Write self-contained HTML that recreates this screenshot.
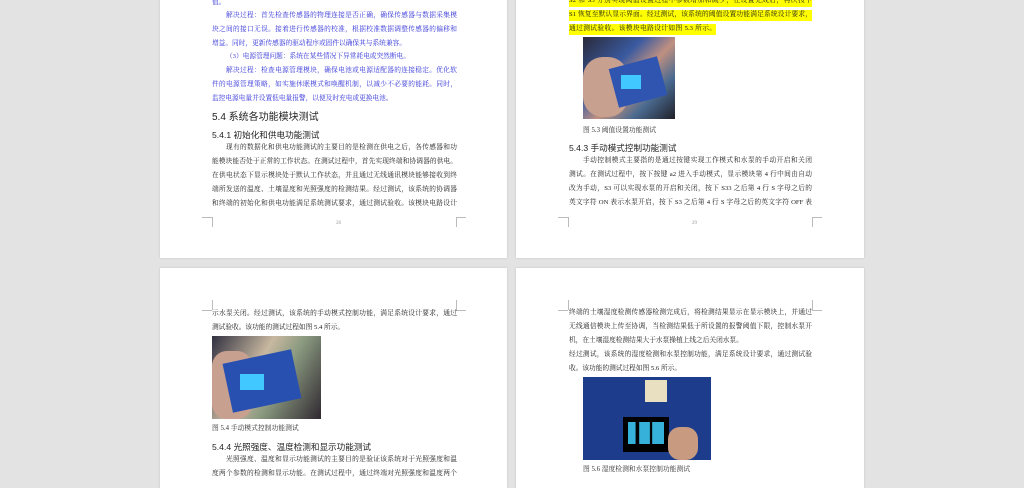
<!DOCTYPE html>
<html><head><meta charset="utf-8"><style>
body{margin:0;width:1024px;height:483px;background:#e3e3e3;position:relative;overflow:hidden;font-family:"Liberation Serif","Noto Serif CJK SC","Noto Sans CJK SC",serif;}
.pg{position:absolute;background:#fff;box-shadow:0 0 2px rgba(0,0,0,.15);}
.l{position:absolute;font-size:6.7px;line-height:10px;white-space:nowrap;color:#1a1a1a;text-align:justify;text-align-last:justify;height:11px;}
.b{color:#3030d8;}
.h{position:absolute;font-size:10px;color:#222;white-space:nowrap;font-family:"Liberation Sans","Noto Sans CJK SC",sans-serif;}
.h2{position:absolute;font-size:8.6px;color:#222;white-space:nowrap;font-family:"Liberation Sans","Noto Sans CJK SC",sans-serif;}
.cap{position:absolute;font-size:6.8px;color:#333;white-space:nowrap;}
.pn{position:absolute;font-size:5px;color:#999;}
.y{background:#ffff00;}
.m{position:absolute;border-color:#bbb;border-style:solid;width:10px;height:10px;}
.img{position:absolute;overflow:hidden;}
</style></head><body>
<div class="pg" style="left:160px;top:-5px;width:347px;height:263px"></div>
<div class="pg" style="left:516px;top:-5px;width:348px;height:263px"></div>
<div class="pg" style="left:160px;top:268px;width:347px;height:220px"></div>
<div class="pg" style="left:516px;top:268px;width:348px;height:220px"></div>

<!-- TL -->
<div class="l b" style="left:212px;top:-2px;width:30px;text-align-last:left">值。</div>
<div class="l b" style="left:226px;top:11px;width:231px">解决过程：首先检查传感器的物理连接是否正确，确保传感器与数据采集模</div>
<div class="l b" style="left:212px;top:25px;width:245px">块之间的接口无误。接着进行传感器的校准，根据校准数据调整传感器的偏移和</div>
<div class="l b" style="left:212px;top:39px;width:200px;text-align-last:left">增益。同时，更新传感器的驱动程序或固件以确保其与系统兼容。</div>
<div class="l b" style="left:226px;top:52px;width:200px;text-align-last:left">（3）电源管理问题：系统在某些情况下异常耗电或突然断电。</div>
<div class="l b" style="left:226px;top:66px;width:231px">解决过程：检查电源管理模块，确保电池或电源适配器的连接稳定。优化软</div>
<div class="l b" style="left:212px;top:80px;width:245px">件的电源管理策略，如实施休眠模式和唤醒机制，以减少不必要的能耗。同时，</div>
<div class="l b" style="left:212px;top:94px;width:200px;text-align-last:left">监控电源电量并设置低电量报警，以便及时充电或更换电池。</div>
<div class="h" style="left:212px;top:108px">5.4 系统各功能模块测试</div>
<div class="h2" style="left:212px;top:129px">5.4.1 初始化和供电功能测试</div>
<div class="l" style="left:226px;top:143px;width:231px">现有的数据化和供电功能测试的主要目的是检测在供电之后，各传感器和功</div>
<div class="l" style="left:212px;top:157px;width:245px">能模块能否处于正常的工作状态。在测试过程中，首先实现终端和协调器的供电。</div>
<div class="l" style="left:212px;top:171px;width:245px">在供电状态下显示模块处于默认工作状态，并且通过无线通讯模块能够接收到终</div>
<div class="l" style="left:212px;top:185px;width:245px">端所发送的温度、土壤湿度和光照强度的检测结果。经过测试，该系统的协调器</div>
<div class="l" style="left:212px;top:199px;width:245px">和终端的初始化和供电功能满足系统测试要求，通过测试验收。该模块电路设计</div>
<div class="m" style="left:202px;top:217px;border-width:1px 0 0 0;width:10px"></div>
<div class="m" style="left:212px;top:217px;border-width:0 0 0 1px;height:10px;width:0"></div>
<div class="m" style="left:456px;top:217px;border-width:1px 0 0 0;width:10px"></div>
<div class="m" style="left:456px;top:217px;border-width:0 1px 0 0;height:10px;width:0"></div>
<div class="pn" style="left:336px;top:221px">28</div>

<!-- TR -->
<div class="l y" style="left:569px;top:-4px;width:243px">S2 和 S3 分别实现阈值设置过程中参数增加和减少，在设置完成后，再次按下</div>
<div class="l y" style="left:569px;top:10px;width:243px">S1 恢复至默认显示界面。经过测试，该系统的阈值设置功能满足系统设计要求，</div>
<div class="l y" style="left:569px;top:24px;width:147px">通过测试验收。该模块电路设计如图 5.3 所示。</div>
<div class="img" style="left:583px;top:37px;width:92px;height:82px;background:linear-gradient(135deg,#2a2a3a 0%,#3a5aa0 35%,#c09080 55%,#4a6a90 75%,#202028 100%)">
 <div style="position:absolute;left:0;top:20px;width:45px;height:60px;background:#c8a090;border-radius:20px"></div>
 <div style="position:absolute;left:30px;top:25px;width:50px;height:40px;background:#2f55b0;transform:rotate(-15deg)"></div>
 <div style="position:absolute;left:38px;top:38px;width:20px;height:14px;background:#40c8ff"></div>
</div>
<div class="cap" style="left:583px;top:124px">图 5.3 阈值设置功能测试</div>
<div class="h2" style="left:569px;top:142px">5.4.3 手动模式控制功能测试</div>
<div class="l" style="left:583px;top:156px;width:229px">手动控制模式主要指的是通过按键实现工作模式和水泵的手动开启和关闭</div>
<div class="l" style="left:569px;top:170px;width:243px">测试。在测试过程中，按下按键 a2 进入手动模式，显示模块第 4 行中间由自动</div>
<div class="l" style="left:569px;top:184px;width:243px">改为手动，S3 可以实现水泵的开启和关闭，按下 S33 之后第 4 行 S 字母之后的</div>
<div class="l" style="left:569px;top:198px;width:243px">英文字符 ON 表示水泵开启，按下 S3 之后第 4 行 S 字母之后的英文字符 OFF 表</div>
<div class="m" style="left:558px;top:217px;border-width:1px 0 0 0;width:10px"></div>
<div class="m" style="left:568px;top:217px;border-width:0 0 0 1px;height:10px;width:0"></div>
<div class="m" style="left:812px;top:217px;border-width:1px 0 0 0;width:10px"></div>
<div class="m" style="left:812px;top:217px;border-width:0 1px 0 0;height:10px;width:0"></div>
<div class="pn" style="left:692px;top:221px">29</div>

<!-- BL -->
<div class="m" style="left:212px;top:300px;border-width:0 0 0 1px;height:10px;width:0"></div>
<div class="m" style="left:202px;top:310px;border-width:1px 0 0 0;width:10px"></div>
<div class="m" style="left:456px;top:300px;border-width:0 1px 0 0;height:10px;width:0"></div>
<div class="m" style="left:456px;top:310px;border-width:1px 0 0 0;width:10px"></div>
<div class="l" style="left:212px;top:309px;width:245px">示水泵关闭。经过测试，该系统的手动模式控制功能，满足系统设计要求，通过</div>
<div class="l" style="left:212px;top:323px;width:150px;text-align-last:left">测试验收。该功能的测试过程如图 5.4 所示。</div>
<div class="img" style="left:212px;top:336px;width:109px;height:83px;background:linear-gradient(120deg,#303040 0%,#c8b8a0 40%,#8a9a80 60%,#302830 100%)">
 <div style="position:absolute;left:0;top:15px;width:40px;height:68px;background:#c8a090;border-radius:15px"></div>
 <div style="position:absolute;left:15px;top:20px;width:70px;height:50px;background:#2850b0;transform:rotate(-12deg)"></div>
 <div style="position:absolute;left:28px;top:38px;width:24px;height:16px;background:#40c8ff"></div>
</div>
<div class="cap" style="left:212px;top:422px">图 5.4 手动模式控制功能测试</div>
<div class="h2" style="left:212px;top:441px">5.4.4 光照强度、温度检测和显示功能测试</div>
<div class="l" style="left:226px;top:455px;width:231px">光照强度、温度和显示功能测试的主要目的是验证该系统对于光照强度和温</div>
<div class="l" style="left:212px;top:469px;width:245px">度两个参数的检测和显示功能。在测试过程中，通过终端对光照强度和温度两个</div>

<!-- BR -->
<div class="m" style="left:568px;top:300px;border-width:0 0 0 1px;height:10px;width:0"></div>
<div class="m" style="left:558px;top:310px;border-width:1px 0 0 0;width:10px"></div>
<div class="m" style="left:812px;top:300px;border-width:0 1px 0 0;height:10px;width:0"></div>
<div class="m" style="left:812px;top:310px;border-width:1px 0 0 0;width:10px"></div>
<div class="l" style="left:569px;top:308px;width:243px">终端的土壤湿度检测传感器检测完成后，将检测结果显示在显示模块上，并通过</div>
<div class="l" style="left:569px;top:322px;width:243px">无线通信模块上传至协调，当检测结果低于所设置的报警阈值下限，控制水泵开</div>
<div class="l" style="left:569px;top:336px;width:200px;text-align-last:left">机，在土壤湿度检测结果大于水泵操植上线之后关闭水泵。</div>
<div class="l" style="left:569px;top:350px;width:243px">经过测试，该系统的湿度检测和水泵控制功能，满足系统设计要求，通过测试验</div>
<div class="l" style="left:569px;top:364px;width:150px;text-align-last:left">收。该功能的测试过程如图 5.6 所示。</div>
<div class="img" style="left:583px;top:377px;width:128px;height:83px;background:#1d3c8c">
 <div style="position:absolute;left:62px;top:3px;width:22px;height:22px;background:#e8e0c0"></div>
 <div style="position:absolute;left:40px;top:40px;width:46px;height:35px;background:#000"></div>
 <div style="position:absolute;left:45px;top:45px;width:36px;height:22px;background:linear-gradient(90deg,#40d0ff 20%,#000 22%,#000 30%,#40d0ff 32%,#40d0ff 60%,#000 62%,#000 66%,#40d0ff 68%);opacity:.85"></div>
 <div style="position:absolute;left:85px;top:50px;width:30px;height:33px;background:#c89a80;border-radius:12px"></div>
</div>
<div class="cap" style="left:583px;top:463px">图 5.6 湿度检测和水泵控制功能测试</div>
</body></html>
